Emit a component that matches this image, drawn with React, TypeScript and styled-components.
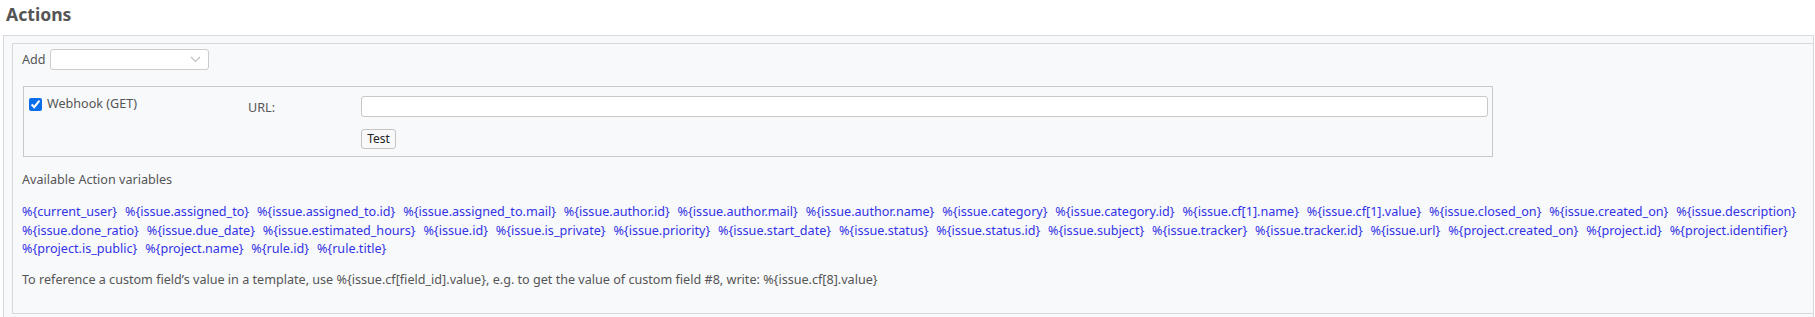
import React from "react";
import styled, { createGlobalStyle } from "styled-components";

const Global = createGlobalStyle`
  html, body { margin: 0; padding: 0; background: #ffffff; overflow: hidden; }
  body {
    font-family: "Noto Sans", "Open Sans", "Liberation Sans", sans-serif;
    font-size: 12.6px;
    color: #555555;
    width: 1815px;
  }
`;

const Page = styled.div`
  display: flex;
  flex-direction: column;
`;

const Heading = styled.h3`
  margin: 2px 0 9px 6px;
  font-size: 17.6px;
  line-height: 24px;
  font-weight: 700;
  color: #555555;
`;

const OuterBox = styled.div`
  margin-left: 3px;
  width: 1811px;
  border: 1px solid #d5d9df;
  border-bottom: none;
  background: #f8f9fb;
  padding: 7px 0 8px 8px;
  box-sizing: border-box;
`;

const InnerBox = styled.div`
  border: 1px solid #d5d9df;
  border-right: none;
  padding: 5px 0 24px 9px;
  display: flex;
  flex-direction: column;
`;

const AddRow = styled.div`
  display: flex;
  align-items: center;
  gap: 4px;
  height: 21px;
`;

const AddLabel = styled.span`
  color: #555555;
`;

const SelectBox = styled.div`
  width: 159px;
  height: 21px;
  box-sizing: border-box;
  border: 1px solid #cccccc;
  border-radius: 3px;
  background: #ffffff;
  display: flex;
  align-items: center;
  justify-content: flex-end;
  padding-right: 7px;
`;

const ActionFieldset = styled.div`
  margin: 16px 0 0 1px;
  width: 1470px;
  box-sizing: border-box;
  border: 1px solid #c9c9c9;
  padding: 9px 4px 7px 5px;
  display: grid;
  grid-template-columns: 219px 113px 1fr;
  grid-template-rows: 21px 20px;
  row-gap: 12px;
`;

const CheckCell = styled.label`
  display: flex;
  align-items: flex-start;
  gap: 5px;
  line-height: 16px;
  color: #555555;
`;

const Check = styled.input`
  margin: 2px 0 0 0;
  width: 13px;
  height: 13px;
  accent-color: #0a6ee8;
`;

const FieldLabel = styled.span`
  display: flex;
  align-items: center;
  padding-top: 1px;
  color: #555555;
`;

const UrlInput = styled.input`
  box-sizing: border-box;
  width: 100%;
  height: 21px;
  margin: 0;
  border: 1px solid #c8c8c8;
  border-radius: 3px;
  background: #ffffff;
  padding: 2px 4px;
  font: inherit;
`;

const TestButton = styled.button`
  grid-column: 3;
  justify-self: start;
  height: 20px;
  width: 35px;
  box-sizing: border-box;
  padding: 0;
  border: 1px solid #c4c4c4;
  border-radius: 3px;
  background: #f9f9f9;
  font-family: "Noto Sans", "Open Sans", sans-serif;
  font-size: 12px;
  color: #222222;
  line-height: 18px;
`;

const Para = styled.p<{ $top: number }>`
  margin: ${(p) => p.$top}px 0 0 0;
  line-height: 18px;
  color: #555555;
`;

const VarList = styled.div`
  margin-top: 14px;
  width: 1792px;
  display: flex;
  flex-wrap: wrap;
  column-gap: 7.8px;
  line-height: 18.6px;
`;

const VarLink = styled.a`
  color: #3232e6;
  text-decoration: none;
  white-space: nowrap;
`;

const vars = [
  "current_user",
  "issue.assigned_to",
  "issue.assigned_to.id",
  "issue.assigned_to.mail",
  "issue.author.id",
  "issue.author.mail",
  "issue.author.name",
  "issue.category",
  "issue.category.id",
  "issue.cf[1].name",
  "issue.cf[1].value",
  "issue.closed_on",
  "issue.created_on",
  "issue.description",
  "issue.done_ratio",
  "issue.due_date",
  "issue.estimated_hours",
  "issue.id",
  "issue.is_private",
  "issue.priority",
  "issue.start_date",
  "issue.status",
  "issue.status.id",
  "issue.subject",
  "issue.tracker",
  "issue.tracker.id",
  "issue.url",
  "project.created_on",
  "project.id",
  "project.identifier",
  "project.is_public",
  "project.name",
  "rule.id",
  "rule.title",
];

export default function App() {
  return (
    <Page>
      <Global />
      <Heading>Actions</Heading>
      <OuterBox>
        <InnerBox>
          <AddRow>
            <AddLabel>Add</AddLabel>
            <SelectBox>
              <svg width="11" height="7" viewBox="0 0 11 7">
                <path d="M1 1 L5.5 5.5 L10 1" fill="none" stroke="#c2c2c2" strokeWidth="1.2" />
              </svg>
            </SelectBox>
          </AddRow>
          <ActionFieldset>
            <CheckCell>
              <Check type="checkbox" defaultChecked />
              Webhook (GET)
            </CheckCell>
            <FieldLabel>URL:</FieldLabel>
            <UrlInput type="text" />
            <TestButton type="button">Test</TestButton>
          </ActionFieldset>
          <Para $top={14}>Available Action variables</Para>
          <VarList>
            {vars.map((v) => (
              <VarLink key={v} href="#">{`%{${v}}`}</VarLink>
            ))}
          </VarList>
          <Para $top={12}>
            To reference a custom field’s value in a template, use %{"{"}issue.cf[field_id].value{"}"}, e.g. to get the value of custom field #8, write: %{"{"}issue.cf[8].value{"}"}
          </Para>
        </InnerBox>
      </OuterBox>
    </Page>
  );
}
